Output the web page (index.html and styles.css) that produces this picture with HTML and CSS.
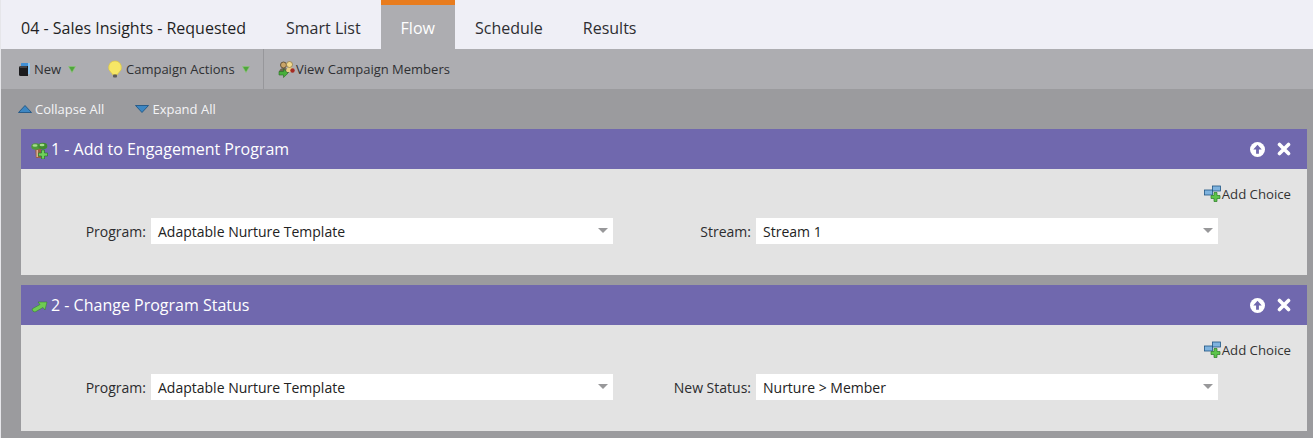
FILE: index.html
```html
<!DOCTYPE html>
<html lang="en">
<head>
<meta charset="utf-8">
<title>Flow</title>
<link rel="stylesheet" href="styles.css">
</head>
<body>
<div class="page">
  <nav class="tabs">
    <span class="tab title">04 - Sales Insights - Requested</span>
    <span class="tab smart">Smart List</span>
    <span class="tab active">Flow</span>
    <span class="tab">Schedule</span>
    <span class="tab">Results</span>
  </nav>
  <div class="toolbar">
    <div class="tool-group">
      <span class="tool tool-new">
        <svg class="ico" width="16" height="16" viewBox="0 0 16 16"><rect x="3" y="2" width="9" height="11" rx=".5" fill="#3f8fd6"/><rect x="10" y="2" width="2" height="11" fill="#8cc4f0"/><path d="M1 6.500q0-1.500 1.500-1.500H10v10H2.500Q1 15 1 13.500z" fill="#1b1b1d"/><rect x="2" y="5.500" width="7" height="1" fill="#6a6d72"/></svg>
        <span>New</span>
        <svg class="caret" width="8" height="7" viewBox="0 0 8 7"><path d="M.5.500h7L4 6.500z" fill="#4fa63c" stroke="#8fc97a" stroke-width=".6"/></svg>
      </span>
      <span class="tool tool-actions">
        <svg class="ico" width="16" height="18" viewBox="0 0 16 18"><path d="M7 1a6.500 6.500 0 0 0-3.800 11.700c.9.700 1.300 1.300 1.300 2h5c0-.7.400-1.300 1.300-2A6.500 6.500 0 0 0 7 1z" fill="#f6e766" stroke="#dcc63f" stroke-width=".7"/><rect x="5" y="14.500" width="4" height="3" rx="1" fill="#5b5b5b"/></svg>
        <span>Campaign Actions</span>
        <svg class="caret" width="8" height="7" viewBox="0 0 8 7"><path d="M.5.500h7L4 6.500z" fill="#4fa63c" stroke="#8fc97a" stroke-width=".6"/></svg>
      </span>
    </div>
    <div class="tool-group members">
      <span class="tool">
        <svg class="ico" width="17" height="17" viewBox="0 0 17 17"><path d="M1 12q0-5 5-5t5 5z" fill="#6d6450"/><path d="M8 11q0-5 4-5t4 5z" fill="#e9cf86"/><circle cx="5.500" cy="4" r="3" fill="#c9a468" stroke="#4f4028" stroke-width=".8"/><circle cx="11.500" cy="3.500" r="3" fill="#f2d98e" stroke="#8a7440" stroke-width=".7"/><circle cx="14.500" cy="9.500" r="2.200" fill="#a52b25"/><path d="M1 10.500h4.500V8l4.500 4.200-4.500 4.300V14H1z" fill="#48b03c" stroke="#2b6d25" stroke-width=".6"/></svg>
        <span class="members-text">View Campaign Members</span>
      </span>
    </div>
  </div>
  <main class="main">
    <div class="expanders">
      <span class="expander">
        <svg width="14" height="8" viewBox="0 0 14 8"><path d="M7 .5L13.500 7.500H.5z" fill="#3c86c2" stroke="#174f80" stroke-width=".8"/></svg>
        Collapse All
      </span>
      <span class="expander">
        <svg width="14" height="8" viewBox="0 0 14 8"><path d="M.5.500h13L7 7.500z" fill="#3c86c2" stroke="#174f80" stroke-width=".8"/></svg>
        Expand All
      </span>
    </div>
    <section class="card">
      <header class="card-head">
        <svg class="step-ico" width="17" height="17" viewBox="0 0 17 17"><path d="M4 6h6l.5 10H5z" fill="#9a6044"/><path d="M5.500 8h1.500v7H5.500z" fill="#d9b193"/><ellipse cx="4.800" cy="4.500" rx="4.500" ry="3.200" fill="#4f9a3a"/><ellipse cx="11.800" cy="4" rx="4.500" ry="3.200" fill="#3f8a30"/><ellipse cx="4" cy="3.500" rx="2.500" ry="1.200" fill="#a5dc8c"/><ellipse cx="11" cy="3" rx="2.500" ry="1.200" fill="#a5dc8c"/><path d="M10.500 8h3v3h3v3h-3v3h-3v-3h-3v-3h3z" fill="#6fd05a" stroke="#2a7a26" stroke-width=".7"/></svg>
        <span class="step-title">1 - Add to Engagement Program</span>
        <span class="head-actions">
          <svg width="15" height="15" viewBox="0 0 16 16"><circle cx="8" cy="8" r="8" fill="#fff"/><path d="M8 3l4.500 5H9.500v4.500h-3V8H3.500z" fill="#7068ae"/></svg>
          <svg width="14" height="14" viewBox="0 0 14 14"><path d="M2.500 2.500l9 9M11.500 2.500l-9 9" stroke="#fff" stroke-width="3.600" stroke-linecap="round"/></svg>
        </span>
      </header>
      <div class="card-body">
        <div class="choice-row">
          <span class="add-choice">
            <svg width="18" height="17" viewBox="0 0 18 17"><rect x=".5" y="5" width="8" height="5" fill="#7fb3de" stroke="#1f5584" stroke-width=".8"/><rect x="8.500" y="1" width="8" height="5" fill="#7fb3de" stroke="#1f5584" stroke-width=".8"/><path d="M10 7.500h3v3h3v3h-3v3h-3v-3H7v-3h3z" fill="#5cc54a" stroke="#2a7a26" stroke-width=".7"/></svg>
            Add Choice
          </span>
        </div>
        <div class="field-row">
          <label class="label label-1">Program:</label>
          <div class="select"><span>Adaptable Nurture Template</span><i class="arrow"></i></div>
          <label class="label label-2">Stream:</label>
          <div class="select"><span>Stream 1</span><i class="arrow"></i></div>
        </div>
      </div>
    </section>
    <section class="card">
      <header class="card-head">
        <svg class="step-ico" width="17" height="17" viewBox="0 0 17 17"><path d="M1 11L9 6.500 7 4h9l-2 8-2-2.500L4 14q-2.500 0-3-3z" fill="#6fcb52" stroke="#2f7a2a" stroke-width=".5"/></svg>
        <span class="step-title">2 - Change Program Status</span>
        <span class="head-actions">
          <svg width="15" height="15" viewBox="0 0 16 16"><circle cx="8" cy="8" r="8" fill="#fff"/><path d="M8 3l4.500 5H9.500v4.500h-3V8H3.500z" fill="#7068ae"/></svg>
          <svg width="14" height="14" viewBox="0 0 14 14"><path d="M2.500 2.500l9 9M11.500 2.500l-9 9" stroke="#fff" stroke-width="3.600" stroke-linecap="round"/></svg>
        </span>
      </header>
      <div class="card-body">
        <div class="choice-row">
          <span class="add-choice">
            <svg width="18" height="17" viewBox="0 0 18 17"><rect x=".5" y="5" width="8" height="5" fill="#7fb3de" stroke="#1f5584" stroke-width=".8"/><rect x="8.500" y="1" width="8" height="5" fill="#7fb3de" stroke="#1f5584" stroke-width=".8"/><path d="M10 7.500h3v3h3v3h-3v3h-3v-3H7v-3h3z" fill="#5cc54a" stroke="#2a7a26" stroke-width=".7"/></svg>
            Add Choice
          </span>
        </div>
        <div class="field-row">
          <label class="label label-1">Program:</label>
          <div class="select"><span>Adaptable Nurture Template</span><i class="arrow"></i></div>
          <label class="label label-2">New Status:</label>
          <div class="select"><span>Nurture &gt; Member</span><i class="arrow"></i></div>
        </div>
      </div>
    </section>
  </main>
</div>
</body>
</html>
```
FILE: styles.css
```css
* { box-sizing: border-box; }
html, body { margin: 0; padding: 0; }
body {
  width: 1313px;
  height: 438px;
  overflow: hidden;
  font-family: "Open Sans", sans-serif;
  background: #9b9b9e;
}
.page {
  height: 438px;
  border-left: 1px solid #e6e6ea;
  display: flex;
  flex-direction: column;
}
.tabs {
  height: 49px;
  background: #efeff6;
  display: flex;
  flex: none;
}
.tab {
  display: flex;
  align-items: center;
  padding: 1px 20px 0;
  font-size: 16px;
  color: #2e2e32;
  border-top: 5px solid transparent;
}
.tab.title { color: #1f1f24; }
.tab.active {
  background: #adadb1;
  color: #fff;
  border-top-color: #e87c1e;
}
.toolbar {
  height: 40px;
  flex: none;
  background: #adadb1;
  display: flex;
  font-size: 13px;
  color: #2f3033;
}
.tool-group {
  display: flex;
  align-items: center;
  padding-left: 17px;
  width: 263px;
  border-right: 1px solid #97979b;
}
.tool-group.members {
  width: auto;
  border-right: 0;
  padding-left: 14px;
}
.tool { display: flex; align-items: center; }
.ico, .caret { flex: none; }
.tool-new { width: 90px; }
.tool-new .caret { margin-left: 7px; }
.tool-actions .caret { margin-left: 7px; }
.tool-actions .ico { margin-right: 2px; }
.members-text { margin-left: 1px; }
.main {
  flex: 1;
  padding: 0 6px 0 20px;
  background: #9b9b9e;
}
.expanders {
  height: 40px;
  margin-left: -3px;
  display: flex;
  align-items: center;
  gap: 31px;
  font-size: 13px;
  color: #f4f4f6;
}
.expander { display: flex; align-items: center; gap: 3px; }
.card { margin-bottom: 10px; }
.card-head {
  height: 40px;
  background: #7068ae;
  color: #fff;
  display: flex;
  align-items: center;
  padding: 0 16px 0 10px;
  font-size: 16px;
}
.step-ico { margin-right: 3px; margin-top: 2px; flex: none; }
.step-title { flex: 1; }
.head-actions { display: flex; align-items: center; gap: 12px; }
.card-body {
  height: 106px;
  background: #e3e3e3;
  font-size: 14px;
  color: #2c2c2e;
}
.choice-row {
  height: 49px;
  padding: 16px 16px 0 0;
  display: flex;
  justify-content: flex-end;
}
.add-choice {
  display: flex;
  align-items: center;
  height: 17px;
  font-size: 13.2px;
  color: #333;
}
.field-row { display: flex; align-items: center; height: 26px; }
.label { text-align: right; padding-right: 5px; }
.label-1 { width: 130px; }
.label-2 { width: 143px; }
.select {
  width: 462px;
  height: 26px;
  background: #fff;
  display: flex;
  align-items: center;
  justify-content: space-between;
  padding: 0 5px 0 7px;
  color: #222;
}
.arrow {
  width: 0;
  height: 0;
  border-left: 5px solid transparent;
  border-right: 5px solid transparent;
  border-top: 5px solid #98989a;
  margin-top: -2px;
}
```
